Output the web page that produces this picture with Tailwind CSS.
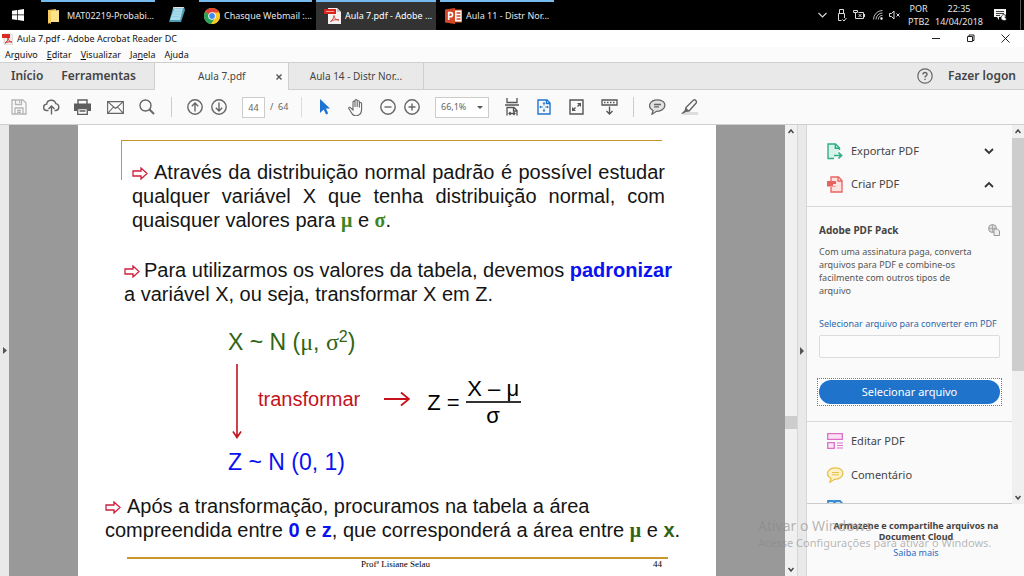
<!DOCTYPE html>
<html lang="pt-BR">
<head>
<meta charset="utf-8">
<meta name="viewport" content="width=device-width, initial-scale=1">
<title>Aula 7.pdf - Adobe Acrobat Reader DC</title>
<script src="https://cdn.jsdelivr.net/npm/@tailwindcss/browser@4"></script>
</head>
<body class="relative flex h-screen flex-col overflow-hidden bg-[#fafafa] font-['Noto_Sans','Open_Sans',sans-serif] text-[9px] text-[#444]">

<!-- Windows taskbar -->
<nav class="flex h-[30px] shrink-0 items-stretch bg-black text-[9px] text-[#e4e4e4]" aria-label="Barra de tarefas">
  <button class="flex w-9 items-center justify-center" aria-label="Iniciar">
    <svg class="size-3" viewBox="0 0 12 12" fill="#fff"><path d="M0 1.7 5.3 1v4.6H0zM6 .9 12 0v5.6H6zM0 6.3h5.3V11L0 10.3zM6 6.3h6V12l-6-.9z"/></svg>
  </button>
  <button class="ml-[5px] flex w-[114px] items-center border-t-2 border-[#76b9ed] pl-[7px] whitespace-nowrap">
    <svg class="mr-2 h-[15px] w-[11px]" viewBox="0 0 11 15"><path d="M0 1 8 0v13H3L0 15z" fill="#e9b94a"/><path d="M3 2l8-1v12H3z" fill="#fce28b"/><path d="M0 1l3 1v13l-3-2z" fill="#f5cc5e"/></svg>
    MAT02219-Probabi...
  </button>
  <button class="flex w-11 items-center justify-center" aria-label="Bloco de notas">
    <svg class="h-4 w-[18px]" viewBox="0 0 18 16"><path d="M5 1 16 0l1 3-4 12H1z" fill="#4f9db5"/><path d="M6 2l9-1-3 12H2z" fill="#a9dcea"/><path d="M6 4.500h7M5 7h7M4 9.500h7" stroke="#8accdd" stroke-width=".8"/><path d="M5 1 16 0" stroke="#e5e5e5" stroke-width="1.500"/></svg>
  </button>
  <button class="flex w-[113px] items-center border-t-2 border-[#76b9ed] pl-[5px] whitespace-nowrap">
    <svg class="mr-1 size-4 shrink-0" viewBox="0 0 16 16"><circle cx="8" cy="8" r="8" fill="#f9c824"/><path d="M8 8 1.100 4A8 8 0 0 1 14.900 4z" fill="#e04436"/><path d="M1.100 4A8 8 0 0 0 7.200 16L11 10 8 8z" fill="#27a258"/><path d="M8 4.400h7.100A8 8 0 0 1 7.200 16l3.900-6z" fill="#f9c824"/><circle cx="8" cy="8" r="3.800" fill="#fff"/><circle cx="8" cy="8" r="2.900" fill="#4688f1"/></svg>
    Chasque Webmail :...
  </button>
  <button class="ml-1 flex w-[120px] items-center border-t-2 border-[#76b9ed] bg-[#333] pl-2 text-white whitespace-nowrap">
    <svg class="mr-1 h-4 w-[17px] shrink-0" viewBox="0 0 17 16"><path d="M4 0h9l4 4v12H4z" fill="#f4f1f1"/><path d="M13 0v4h4z" fill="#c9c4c4"/><path d="M0 1h12v5H0z" fill="#d9231c"/><path d="M2 3.500h8" stroke="#f3a19c" stroke-width="1"/><path d="M6.500 13.500c2-1 3.500-4 3.500-6 0 3 2 4.500 5 4.500-3-.8-6 0-8.500 1.500z" fill="none" stroke="#d9342c" stroke-width=".9"/></svg>
    Aula 7.pdf - Adobe ...
  </button>
  <button class="ml-1 flex w-[114px] items-center border-t-2 border-[#76b9ed] pl-[5px] whitespace-nowrap">
    <svg class="mr-1 h-4 w-[17px] shrink-0" viewBox="0 0 17 16"><path d="M9 2h8v12H9z" fill="#fff" stroke="#d24726"/><path d="M11.500 5h4M11.500 8h4M11.500 11h4" stroke="#d24726" stroke-width="1.300"/><path d="M0 1.500 10 0v16L0 14.500z" fill="#d24726"/><path d="M3.700 12V4.600h1.800c2.800 0 2.800 4.200 0 4.200H3.700" fill="none" stroke="#fff" stroke-width="1.600"/></svg>
    Aula 11 - Distr Nor...
  </button>
  <div class="ml-auto flex items-center">
    <svg class="mr-[10px] h-2 w-[9px]" viewBox="0 0 9 8" fill="none" stroke="#ddd" stroke-width="1.100"><path d="M.5 2 4.500 6l4-4"/></svg>
    <svg class="mr-[6px] h-[13px] w-[10px]" viewBox="0 0 10 13" fill="none" stroke="#ddd"><path d="M2.500 4V.5h4V4M1.500 11.500v-7h6V9M1.500 11.500h3M5.500 10.500l1.500 1.500L9.500 9"/></svg>
    <svg class="mr-2 h-[10px] w-3" viewBox="0 0 12 10" fill="none" stroke="#ddd"><path d="M.5.500h4v2h-4zM2.500 2.500v6M5.500 2.500h5v6h-8M11.500 4v3M5.500 4l3 3M8.500 4l-3 3"/></svg>
    <svg class="mr-[6px] size-[10px]" viewBox="0 0 10 10" fill="none" stroke="#ccc" stroke-width=".9"><path d="M.5 9.500A9 9 0 0 1 9.500.5M3 9.500A6.500 6.500 0 0 1 9.500 3M5.300 9.500A4.200 4.200 0 0 1 9.500 5.300"/><circle cx="8.500" cy="8.500" r="1" fill="#fff"/></svg>
    <svg class="mr-[7px] h-[10px] w-3" viewBox="0 0 12 10" fill="none" stroke="#ddd"><path d="M.5 3.500h2L5 1v8L2.500 6.500h-2zM7.500 3.500l3 3M10.500 3.500l-3 3"/></svg>
    <div class="w-[21px] text-center leading-[13px]">POR<br>PTB2</div>
    <div class="ml-[6px] w-[48px] text-center leading-[13px]">22:35<br>14/04/2018</div>
    <svg class="ml-[11px] h-3 w-[13px]" viewBox="0 0 13 12"><path d="M0 0h12v8H5v3L3 8H0z" fill="#f3f3f3"/><path d="M2 2.500h8M2 4.500h8M2 6.500h4" stroke="#111" stroke-width=".8"/><path d="M11.500 6a3 3 0 1 0 1.200 4 3 3 0 0 1-1.200-4z" fill="#fff" stroke="#000" stroke-width=".7"/></svg>
    <div class="ml-[13px] h-[30px] w-[4px] border-l border-[#555]"></div>
  </div>
</nav>

<!-- Title bar -->
<header class="flex h-[17px] shrink-0 items-center bg-white pl-[2px] text-[#111]">
  <svg class="mr-1 h-3 w-[11px]" viewBox="0 0 11 12"><path d="M2 1h7l2 2v9H2z" fill="#f2eeee" stroke="#c9c0c0" stroke-width=".6"/><path d="M0 1h8v4H0z" fill="#d92b23"/><path d="M3 10c2-1 3-3 3-5 0 2 2 4 4 4-2-.5-5 0-7 1z" fill="none" stroke="#d92b23"/></svg>
  <h1 class="text-[9px]">Aula 7.pdf - Adobe Acrobat Reader DC</h1>
  <div class="ml-auto flex items-center pr-[14px]">
    <button class="mr-[26px]" aria-label="Minimizar"><svg class="size-2" viewBox="0 0 8 8" stroke="#222"><path d="M0 3.500h8"/></svg></button>
    <button class="mr-[26px]" aria-label="Restaurar"><svg class="size-[9px]" viewBox="0 0 9 9" fill="none" stroke="#222"><path d="M1.500 2.500h5v5h-5zM3 2V1h5v5.500H7"/></svg></button>
    <button aria-label="Fechar"><svg class="size-[9px]" viewBox="0 0 9 9" stroke="#222"><path d="M.5.5l8 8M8.500.5l-8 8"/></svg></button>
  </div>
</header>

<!-- Menu bar -->
<div class="flex h-[15px] shrink-0 items-center gap-[9px] bg-[#fbfbfb] pl-[5px] text-[9px] text-[#111]" role="menubar">
  <button role="menuitem">Ar<u>q</u>uivo</button>
  <button role="menuitem"><u>E</u>ditar</button>
  <button role="menuitem"><u>V</u>isualizar</button>
  <button role="menuitem">Ja<u>n</u>ela</button>
  <button role="menuitem">Ajuda</button>
</div>

<!-- Document tabs -->
<div class="flex h-7 shrink-0 items-stretch border-y border-[#cfcfcf] bg-[#e9e9e9] text-[10px] text-[#444]">
  <button class="pl-[11px] text-xs font-semibold">Início</button>
  <button class="ml-[18px] text-xs font-semibold">Ferramentas</button>
  <div class="-mb-px ml-[18px] flex w-[135px] items-center border-x border-[#cfcfcf] bg-[#fafafa]">
    <span class="ml-[43px]">Aula 7.pdf</span>
    <button class="mr-[6px] ml-auto" aria-label="Fechar guia"><svg class="size-[6px]" viewBox="0 0 6 6" stroke="#555" stroke-width="1.400"><path d="M.5.5l5 5M5.500.5l-5 5"/></svg></button>
  </div>
  <button class="w-[135px] border-r border-[#cfcfcf]">Aula 14 - Distr Nor...</button>
  <button class="mr-[15px] ml-auto" aria-label="Ajuda"><svg class="size-4" viewBox="0 0 16 16" fill="none" stroke="#666" stroke-width="1.200"><circle cx="8" cy="8" r="7.200"/><path d="M6 6.400c0-2.500 4-2.500 4 0C10 8 8 7.800 8 9.600M8 10.800v1.300" stroke-width="1.400"/></svg></button>
  <button class="pr-2 text-xs font-semibold">Fazer logon</button>
</div>

<!-- Toolbar -->
<div class="flex h-[35px] shrink-0 items-center border-b border-[#cfcfcf] bg-[#fafafa] pl-[11px] text-[#666]" role="toolbar">
  <button aria-label="Salvar" class="mr-4"><svg class="size-4" viewBox="0 0 16 16" fill="none" stroke="#b5b5b5" stroke-width="1.300"><path d="M1 1h11l3 3v11H1zM4.500 1v4.500h6V1M4 15V9h8v6M6 11.500h4M6 13.300h4M8.500 2v2"/></svg></button>
  <button aria-label="Enviar para nuvem" class="mr-[14px]"><svg class="h-4 w-[17px]" viewBox="0 0 17 16" fill="none" stroke="#666" stroke-width="1.400"><path d="M5.500 11.500H4a3.200 3.200 0 0 1-.3-6.400C4 .4 11.500-.4 12.800 4.600a3.500 3.500 0 0 1 .2 6.900h-1.500M8.500 15.500V7.500M5.500 10l3-3 3 3"/></svg></button>
  <button aria-label="Imprimir" class="mr-4"><svg class="h-4 w-[17px]" viewBox="0 0 17 16"><path d="M4 5V1h9v4" fill="none" stroke="#5d5d5d" stroke-width="1.400"/><path d="M0 4.500h17V12h-3V9H3v3H0z" fill="#5d5d5d"/><path d="M3.700 9.700h9.600v5.600H3.700zM5.500 12h6" fill="none" stroke="#5d5d5d" stroke-width="1.300"/></svg></button>
  <button aria-label="E-mail" class="mr-[15px]"><svg class="h-[13px] w-[17px]" viewBox="0 0 17 13" fill="none" stroke="#666" stroke-width="1.100"><path d="M.6.6h15.800v11.800H.6zM.6.600 8.500 7.500 16.400.6M.6 12.400 6.500 6M16.400 12.400 10.500 6"/></svg></button>
  <button aria-label="Pesquisar" class="mr-4"><svg class="size-4" viewBox="0 0 16 16" fill="none" stroke="#666" stroke-width="1.400"><circle cx="6.500" cy="6.500" r="5.500"/><path d="M10.500 10.500l4.500 4.500" stroke-width="2"/></svg></button>
  <div class="mr-[15px] h-5 border-l border-[#ccc]"></div>
  <button aria-label="Página anterior" class="mr-2"><svg class="size-4" viewBox="0 0 16 16" fill="none" stroke="#666" stroke-width="1.400"><circle cx="8" cy="8" r="7.200"/><path d="M8 12.500V4M4.800 7.200 8 4l3.200 3.200"/></svg></button>
  <button aria-label="Próxima página" class="mr-[15px]"><svg class="size-4" viewBox="0 0 16 16" fill="none" stroke="#666" stroke-width="1.400"><circle cx="8" cy="8" r="7.200"/><path d="M8 3.500V12M4.800 8.800 8 12l3.200-3.200"/></svg></button>
  <input aria-label="Página" value="44" class="h-[21px] w-[23px] border border-[#ccc] bg-white text-center text-[9px]">
  <span class="ml-[5px] w-[19px] whitespace-nowrap">/&nbsp; 64</span>
  <div class="mr-[18px] ml-[12px] h-5 border-l border-[#dcdcdc]"></div>
  <button aria-label="Selecionar" class="mr-[18px]"><svg class="h-4 w-[10px]" viewBox="0 0 10 16" fill="#1f73d0"><path d="M0 0l10 9.500H6l2.200 5L6 15.500 3.700 10.500 0 14z"/></svg></button>
  <button aria-label="Mão" class="mr-4"><svg class="h-[17px] w-4" viewBox="0 0 16 17" fill="none" stroke="#666" stroke-width="1.100"><path d="M5 9.500V3.200c0-1.400 2-1.400 2 0V1.800c0-1.600 2.200-1.600 2.200 0v1c0-1.400 2.200-1.400 2.200 0v1.600c0-1.300 2.200-1.200 2.200.2V10c0 8-8 8.200-10 4L.9 9.800c-.8-1.300.8-2.200 1.800-1L5 11V9M7 3v5M9.200 3v5M11.400 4v4.500"/></svg></button>
  <button aria-label="Reduzir" class="mr-2"><svg class="size-4" viewBox="0 0 16 16" fill="none" stroke="#666" stroke-width="1.400"><circle cx="8" cy="8" r="7.200"/><path d="M4.500 8h7"/></svg></button>
  <button aria-label="Ampliar" class="mr-[15px]"><svg class="size-4" viewBox="0 0 16 16" fill="none" stroke="#666" stroke-width="1.400"><circle cx="8" cy="8" r="7.200"/><path d="M4.500 8h7M8 4.500v7"/></svg></button>
  <div class="relative">
    <select aria-label="Zoom" class="block h-[21px] w-[54px] appearance-none border border-[#ccc] bg-white pl-[5px] text-[9px]"><option>66,1%</option></select>
    <svg class="pointer-events-none absolute top-[9px] right-[6px] h-[3px] w-[6px]" viewBox="0 0 6 3" fill="#555"><path d="M0 0h6L3 3z"/></svg>
  </div>
  <button aria-label="Ajustar largura" class="mr-[18px] ml-4"><svg class="h-[18px] w-[14px]" viewBox="0 0 14 18" fill="none" stroke="#555" stroke-width="1.300"><path d="M2 0v4.500h10V0M0 7h14M2 17.500V9.500h7l3 3v5M8.500 9.500v3.500H12M4 15.500h6M5.500 14 4 15.500 5.500 17M8.500 14l1.500 1.500L8.500 17"/></svg></button>
  <button aria-label="Ajustar página" class="mr-[18px]"><svg class="h-4 w-[14px]" viewBox="0 0 14 16" fill="none" stroke="#1f73d0" stroke-width="1.400"><path d="M1 1h9l3 3v11H1zM9.500 1v3.500H13"/><path d="M7 3.500v3M7 9.500v3M2.800 8h3M8.200 8h3M6 4.800l1-1.200 1 1.200M6 11.200l1 1.200 1-1.200M4 7 2.800 8 4 9M10 7l1.200 1L10 9" stroke-width="1"/></svg></button>
  <button aria-label="Tela cheia" class="mr-[17px]"><svg class="h-4 w-[15px]" viewBox="0 0 15 16" fill="none" stroke="#555" stroke-width="1.400"><path d="M1 1h13v14H1zM8.500 7.500 11.500 4.500M6.500 8.500 3.500 11.500"/><path d="M8 4h4v4zM3 8v4h4z" fill="#555" stroke="none"/></svg></button>
  <button aria-label="Ferramentas de leitura" class="mr-[15px]"><svg class="h-4 w-[17px]" viewBox="0 0 17 16" fill="none" stroke="#555" stroke-width="1.300"><path d="M1 1h15v5H1z"/><path d="M3 3.500h11" stroke-dasharray="1.500 1.500"/><path d="M8.500 7.500V15M5.500 12l3 3 3-3"/></svg></button>
  <div class="mr-[15px] h-5 border-l border-[#ccc]"></div>
  <button aria-label="Comentar" class="mr-[15px]"><svg class="h-4 w-[17px]" viewBox="0 0 17 16" fill="#e2e2e2" stroke="#666" stroke-width="1.300"><path d="M4 11.500C-2.500 8 1 .8 8.500.8c10.500 0 9.500 11.700-1 11.500L3 15.200z"/><path d="M5 5.500h7M5 7.800h5"/></svg></button>
  <button aria-label="Realçar"><svg class="h-4 w-[18px]" viewBox="0 0 18 16"><path d="M5 13h12v3H1z" fill="#ddd"/><path d="M5 8.500 12.300 1.200c1.700-1.200 4 1 2.800 2.800L8.500 11.500 4.500 12z" fill="#fafafa" stroke="#666" stroke-width="1.400"/><path d="M4.500 8.500 9 12.200 5 13l-3 1.800H0L3.500 11.500z" fill="#666"/></svg></button>
</div>

<!-- Workspace -->
<div class="flex min-h-0 flex-1">
  <button class="flex w-[9px] shrink-0 items-center justify-center bg-[#e9e9e9]" aria-label="Mostrar painel de navegação"><svg class="h-[7px] w-1" viewBox="0 0 4 7" fill="#555"><path d="M0 0v7l4-3.500z"/></svg></button>

  <main class="min-w-0 flex-1 overflow-hidden bg-[#999]">
    <article class="mx-auto h-full w-full max-w-[638px] overflow-hidden bg-white pt-[15px] font-['Liberation_Sans',Arial,sans-serif] text-[20px] leading-6 text-[#151515]">
      <div class="mr-[54px] -mb-5 ml-[43px] h-10 border-t border-l border-[#c8962a]"></div>
      <p class="mr-[51px] ml-[54px] text-justify"><svg class="mr-[6px] inline h-[13px] w-4 align-[-1px]" viewBox="0 0 16 13" fill="none" stroke="#cf1f3a" stroke-width="1.300"><path d="M1 4h8V1l6 5.500L9 12V9H1z"/></svg>Através da distribuição normal padrão é possível estudar qualquer variável X que tenha distribuição normal, com quaisquer valores para <b class="font-['Liberation_Serif',serif] text-[#3b8526]">μ</b> e <b class="font-['Liberation_Serif',serif] text-[#3b8526]">σ</b>.</p>
      <p class="mt-[26px] ml-[46px] whitespace-nowrap"><svg class="mr-1 inline h-[13px] w-4 align-[-1px]" viewBox="0 0 16 13" fill="none" stroke="#cf1f3a" stroke-width="1.300"><path d="M1 4h8V1l6 5.500L9 12V9H1z"/></svg>Para utilizarmos os valores da tabela, devemos <b class="text-[#0a12f0]">padronizar</b><br>a variável X, ou seja, transformar X em Z.</p>

      <div class="mt-5 ml-[150px]">
        <p class="h-8 text-[23px] leading-8 text-[#2f6414]">X ~ N (<span class="font-['Liberation_Serif',serif] text-[24px]">μ</span>, <span class="font-['Liberation_Serif',serif] text-[24px]">σ</span><sup class="text-[16px]">2</sup>)</p>
        <div class="mt-[6px] flex h-[70px] items-center">
          <svg class="ml-1 h-[75px] w-[10px] self-start" viewBox="0 0 10 75" fill="none" stroke="#c5121c" stroke-width="1.600"><path d="M5 0v74M1 67.500l4 6 4-6"/></svg>
          <span class="ml-4 text-[#c5121c]">transformar</span>
          <svg class="ml-6 h-4 w-[26px]" viewBox="0 0 26 16" fill="none" stroke="#c5121c" stroke-width="1.800"><path d="M0 8h25M17 1.500 25 8l-8 6.500"/></svg>
          <div class="ml-[17px] flex items-center gap-[6px] pt-2 text-[22px] text-black">
            <span>Z =</span>
            <div class="w-[55px] text-center">
              <div class="h-[26px] border-b-2 border-[#333]">X – μ</div>
              <div class="h-[26px] leading-[26px]">σ</div>
            </div>
          </div>
        </div>
        <p class="mt-3 h-8 text-[23px] leading-8 text-[#0a12f0]">Z ~ N (0, 1)</p>
      </div>

      <p class="mt-4 ml-[27px] whitespace-nowrap"><svg class="mr-[6px] inline h-[13px] w-4 align-[-1px]" viewBox="0 0 16 13" fill="none" stroke="#cf1f3a" stroke-width="1.300"><path d="M1 4h8V1l6 5.500L9 12V9H1z"/></svg>Após a transformação, procuramos na tabela a área<br>compreendida entre <b class="text-[#0a12f0]">0</b> e <b class="text-[#0a12f0]">z</b>, que corresponderá a área entre <b class="font-['Liberation_Serif',serif] text-[#2f6414]">μ</b> e <b class="text-[#2f6414]">x</b>.</p>
      <footer class="mt-[15px] mr-[48px] ml-[49px] flex justify-between border-t-2 border-[#c8962a] pr-[6px] font-['Liberation_Serif',serif] text-[9px] leading-[10px] text-black">
        <span class="ml-[234px]">Profª Lisiane Selau</span><span>44</span>
      </footer>
    </article>
  </main>

  <!-- Document scrollbar -->
  <div class="flex w-3 shrink-0 flex-col items-center bg-[#f0f0f0]" aria-hidden="true">
    <svg class="mt-1 h-[5px] w-[6px]" viewBox="0 0 6 5" fill="none" stroke="#444" stroke-width="1.500"><path d="M.5 4 3 1l2.500 3"/></svg>
    <div class="mt-auto mb-[138px] h-[13px] w-full bg-[#cdcdcd]"></div>
    <svg class="mb-[4px] h-[5px] w-[6px]" viewBox="0 0 6 5" fill="none" stroke="#444" stroke-width="1.500"><path d="M.5 1 3 4l2.500-3"/></svg>
  </div>
  <button class="flex w-[10px] shrink-0 items-center justify-center border-x border-[#d6d6d6] bg-[#e9e9e9]" aria-label="Ocultar painel de ferramentas"><svg class="h-[8px] w-1" viewBox="0 0 4 8" fill="#555"><path d="M0 0v8l4-4z"/></svg></button>

  <!-- Tools panel -->
  <aside class="flex w-[217px] shrink-0 flex-col bg-[#fafafa]">
    <div class="flex h-[379px] shrink-0">
      <div class="flex min-w-0 flex-1 flex-col overflow-hidden border-b border-[#ccc] text-[11px]">
        <button class="mt-[10px] flex h-[33px] shrink-0 items-center pr-[18px] pl-5">
          <svg class="mr-2 h-[17px] w-4" viewBox="0 0 16 17" fill="none" stroke="#2fae83" stroke-width="1.400"><path d="M12.500 7V5l-4-4H1v14.500h6M8.300 1v4.200h4" fill="#d8f3e9"/><path d="M7 12.500h7.500M11.500 9.500l3 3-3 3" stroke-width="1.700"/></svg>
          Exportar PDF
          <svg class="ml-auto h-[7px] w-[10px]" viewBox="0 0 10 7" fill="none" stroke="#333" stroke-width="1.800"><path d="M1 1l4 4 4-4"/></svg>
        </button>
        <button class="flex h-[33px] shrink-0 items-center pr-[18px] pl-5">
          <svg class="mr-2 h-[17px] w-4" viewBox="0 0 16 17" fill="none" stroke="#e8635f" stroke-width="1.300"><path d="M4 7V1h7.500L15 4.500V16H4v-5M11 1v4h4" fill="#fde2df"/><path d="M0 5h9v5.500H0z" fill="#e8635f" stroke="none"/><path d="M6 8h6v2H6z" fill="#fde2df" stroke="none"/></svg>
          Criar PDF
          <svg class="ml-auto h-[7px] w-[10px]" viewBox="0 0 10 7" fill="none" stroke="#333" stroke-width="1.800"><path d="M1 6l4-4 4 4"/></svg>
        </button>
        <section class="mt-[5px] flex h-[216px] shrink-0 flex-col border-y border-[#d8d8d8] pr-3 pl-3">
          <div class="mt-[15px] flex h-4 items-center justify-between"><h2 class="text-[10px] font-bold">Adobe PDF Pack</h2>
            <svg class="size-3" viewBox="0 0 12 12" fill="#ddd" stroke="#999"><circle cx="4.500" cy="4.500" r="4"/><path d="M1 4.500h7M4.500 1v7" stroke-width=".7"/><path d="M6 5h3.500l2 2v4.500H6z" fill="#eee"/></svg></div>
          <p class="mt-[7px] text-[9px] leading-[13px] whitespace-nowrap text-[#555]">Com uma assinatura paga, converta<br>arquivos para PDF e combine-os<br>facilmente com outros tipos de<br>arquivo</p>
          <label for="file" class="mt-5 text-[9px] leading-[13px] whitespace-nowrap text-[#2d66a8]">Selecionar arquivo para converter em PDF</label>
          <input id="file" class="mt-[5px] h-[23px] w-full shrink-0 rounded-[2px] border border-[#dcdcdc] bg-[#fcfcfc]">
          <div class="-mx-[2px] mt-[20px] border border-dotted border-[#a66a45] bg-white p-px"><button class="block h-[24px] w-full rounded-full bg-[#1f73cb] text-[11px] text-white">Selecionar arquivo</button></div>
        </section>
        <button class="mt-[2px] flex h-[34px] shrink-0 items-center pl-5">
          <svg class="mr-2 size-4" viewBox="0 0 16 16" fill="#fbe3f5" stroke="#dd6fc6" stroke-width="1.300"><path d="M.7.7h14.600v5.600H.7zM.7 9.700h6.600v5.600H.7z"/><path d="M10 10h6M10 12.500h6M10 15h6" stroke-width="1"/></svg>Editar PDF</button>
        <button class="flex h-[34px] shrink-0 items-center pl-5">
          <svg class="mr-[7px] h-4 w-[17px]" viewBox="0 0 17 16" fill="#fdf2c8" stroke="#e8bf4c" stroke-width="1.300"><path d="M4 11.500C-2.500 8 1 .8 8.500.8c10.500 0 9.500 11.700-1 11.500L3 15.200z"/><path d="M5 5.500h7M5 7.800h7" stroke-width="1"/></svg>Comentário</button>
        <button class="mt-2 flex shrink-0 items-start pl-5" aria-label="Combinar arquivos"><svg class="h-4 w-4" viewBox="0 0 16 16" fill="#cfe4f8" stroke="#3b8ad4" stroke-width="1.800"><path d="M1 15V1h5l2 2v12zM8 15V1h5l2 2v12z"/></svg></button>
      </div>
      <div class="flex w-3 shrink-0 flex-col items-center bg-[#f0f0f0]" aria-hidden="true">
        <svg class="mt-1 h-[5px] w-[6px] shrink-0" viewBox="0 0 6 5" fill="none" stroke="#444" stroke-width="1.500"><path d="M.5 4 3 1l2.500 3"/></svg>
        <div class="mt-1 h-[233px] w-full shrink-0 bg-[#cdcdcd]"></div>
        <svg class="mt-auto mb-1 h-[5px] w-[6px] shrink-0" viewBox="0 0 6 5" fill="none" stroke="#444" stroke-width="1.500"><path d="M.5 1 3 4l2.500-3"/></svg>
      </div>
    </div>
    <div class="mt-4 pl-[1px] text-center">
      <p class="text-[9px] leading-[11px] font-bold">Armazene e compartilhe arquivos na<br>Document Cloud</p>
      <a href="#" class="mt-1 inline-block text-[9px] leading-[14px] text-[#1f6fc4]">Saiba mais</a>
    </div>
  </aside>
</div>

<!-- Windows activation watermark -->
<div class="pointer-events-none absolute right-[40px] bottom-[26px] w-[226px] whitespace-nowrap text-[#888]/60">
  <div class="text-[14px] leading-[18px]">Ativar o Windows</div>
  <div class="text-[11px] leading-[15px]">Acesse Configurações para ativar o Windows.</div>
</div>
</body>
</html>
